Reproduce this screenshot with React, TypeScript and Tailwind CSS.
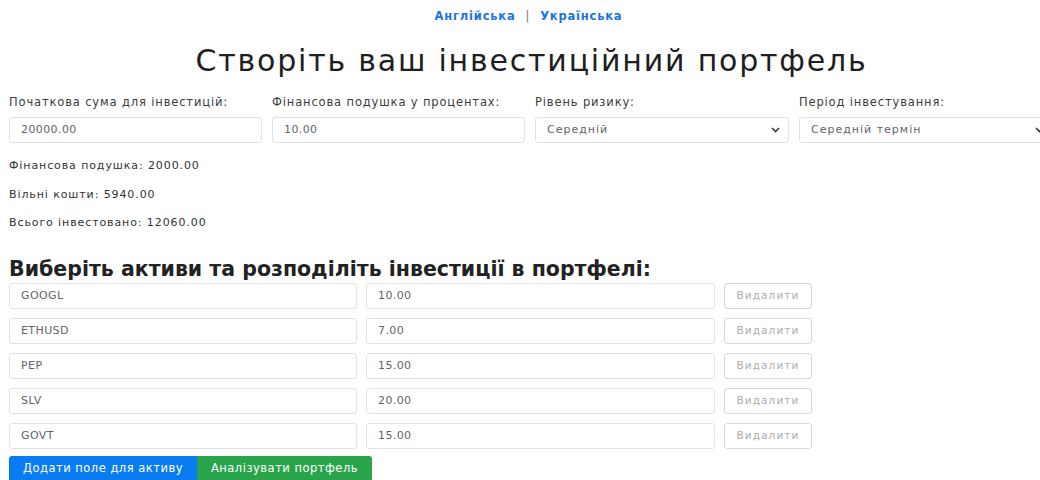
import { useState } from 'react';

type Asset = { ticker: string; share: string };

const INITIAL_ASSETS: Asset[] = [
  { ticker: 'GOOGL', share: '10.00' },
  { ticker: 'ETHUSD', share: '7.00' },
  { ticker: 'PEP', share: '15.00' },
  { ticker: 'SLV', share: '20.00' },
  { ticker: 'GOVT', share: '15.00' },
];

const FONT = "font-['DejaVu_Sans','Noto_Sans',sans-serif]";

const fieldCls =
  'h-[26px] w-full rounded-[3px] border border-[#dfe2e6] bg-white px-[11px] text-[11px] text-[#5f656b] outline-none';
const inputCls = `${fieldCls} tracking-[0.4px]`;
const selectCls = `${fieldCls} appearance-none tracking-[1px]`;

const labelCls = 'block h-[28px] text-[11.5px] leading-[28px] tracking-[0.85px] text-[#3a3d40]';

const Chevron = () => (
  <svg width="9" height="6" viewBox="0 0 9 6" className="absolute right-[9px] top-[11px]">
    <path d="M1 1l3.5 3.5L8 1" fill="none" stroke="#343a40" strokeWidth="1.6" />
  </svg>
);

export default function App() {
  const [amount, setAmount] = useState('20000.00');
  const [cushion, setCushion] = useState('10.00');
  const [assets, setAssets] = useState<Asset[]>(INITIAL_ASSETS);

  const update = (i: number, key: keyof Asset, value: string) =>
    setAssets(prev => prev.map((a, j) => (j === i ? { ...a, [key]: value } : a)));

  return (
    <div className={`h-[480px] w-full overflow-hidden bg-white ${FONT}`}>
      <div className="w-[1054px] pl-[9px]">
        <div className="flex h-[34px] items-center justify-center gap-[10px] pr-[6px] text-[11.5px] font-bold tracking-[0.8px] text-[#1a73e8]">
          <a href="#">Англійська</a>
          <span className="font-normal text-[#777]">|</span>
          <a href="#">Українська</a>
        </div>

        <h1 className="h-[54px] text-center text-[30px] leading-[54px] tracking-[1.8px] text-[#1e1e1e]">
          Створіть ваш інвестиційний портфель
        </h1>

        <div className="flex gap-[10px]">
          <div className="w-[253px]">
            <label className={labelCls}>Початкова сума для інвестицій:</label>
            <input className={inputCls} value={amount} onChange={e => setAmount(e.target.value)} />
          </div>
          <div className="w-[253px]">
            <label className={labelCls}>Фінансова подушка у процентах:</label>
            <input className={inputCls} value={cushion} onChange={e => setCushion(e.target.value)} />
          </div>
          <div className="w-[254px]">
            <label className={labelCls}>Рівень ризику:</label>
            <div className="relative">
              <select className={selectCls} defaultValue="mid">
                <option value="low">Низький</option>
                <option value="mid">Середній</option>
                <option value="high">Високий</option>
              </select>
              <Chevron />
            </div>
          </div>
          <div className="w-[254px]">
            <label className={labelCls}>Період інвестування:</label>
            <div className="relative">
              <select className={selectCls} defaultValue="mid">
                <option value="short">Короткий термін</option>
                <option value="mid">Середній термін</option>
                <option value="long">Довгий термін</option>
              </select>
              <Chevron />
            </div>
          </div>
        </div>

        <div className="mt-[9px] flex flex-col text-[11px] leading-[28.5px] tracking-[0.9px] text-[#333]">
          <p>Фінансова подушка: 2000.00</p>
          <p>Вільні кошти: 5940.00</p>
          <p>Всього інвестовано: 12060.00</p>
        </div>

        <h2 className="mt-[18px] h-[27px] text-[20.5px] font-bold leading-[26px] text-[#222]">
          Виберіть активи та розподіліть інвестиції в портфелі:
        </h2>

        <div className="flex flex-col gap-[9px]">
          {assets.map((a, i) => (
            <div key={i} className="flex gap-[9px]">
              <input className={`${inputCls} !w-[348px]`} value={a.ticker} onChange={e => update(i, 'ticker', e.target.value)} />
              <input className={`${inputCls} !w-[349px]`} value={a.share} onChange={e => update(i, 'share', e.target.value)} />
              <button
                className="h-[26px] w-[88px] rounded-[3px] border border-[#d6d9dc] bg-white text-[10.5px] tracking-[1.1px] text-[#a9adb2]"
                onClick={() => setAssets(prev => prev.filter((_, j) => j !== i))}
              >
                Видалити
              </button>
            </div>
          ))}
        </div>

        <div className="mt-[7px] flex">
          <button
            className="h-[26px] w-[188px] rounded-l-[3px] bg-[#0a7cf2] text-[11.5px] tracking-[0.5px] text-white"
            onClick={() => setAssets(prev => [...prev, { ticker: '', share: '' }])}
          >
            Додати поле для активу
          </button>
          <button className="h-[26px] w-[175px] rounded-r-[3px] bg-[#2aa44a] text-[11.5px] tracking-[0.5px] text-white">
            Аналізувати портфель
          </button>
        </div>
      </div>
    </div>
  );
}
